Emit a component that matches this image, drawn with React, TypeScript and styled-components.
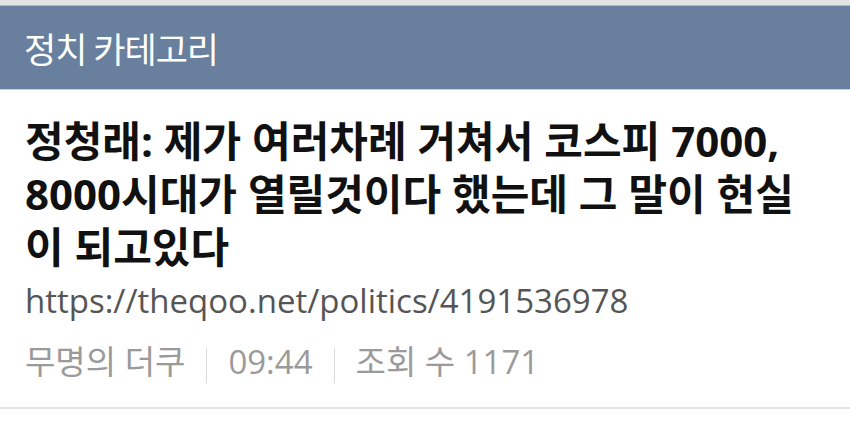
import React, {FC} from "react";
import styled, {createGlobalStyle} from "styled-components";

const GlobalStyle = createGlobalStyle`
  html, body {
    margin: 0;
    padding: 0;
    background: #ffffff;
  }
  body {
    font-family: "Open Sans", "Noto Sans CJK KR", sans-serif;
  }
`

const TopStrip = styled.div`
  height: 5px;
  background: #e4e4e4;
  border-bottom: 1px solid #b3b8be;
`

const Header = styled.header`
  height: 83px;
  background: #687f9e;
  border-bottom: 1px solid #c9d0d8;
  display: flex;
  align-items: center;
  padding-left: 24px;
  color: #ffffff;
  font-family: "Noto Sans CJK KR", sans-serif;
  font-size: 35px;
  font-weight: 400;
  letter-spacing: -1px;
`

const Article = styled.article`
  padding: 24px 40px 24px 25px;
  border-bottom: 2px solid #e2e2e2;
`

const Title = styled.h1`
  margin: 0;
  font-size: 42px;
  line-height: 53px;
  font-weight: 700;
  color: #111111;
`

const Link = styled.div`
  margin-top: 8px;
  font-size: 33px;
  line-height: 40px;
  color: #555555;
`

const Meta = styled.div`
  margin-top: 19px;
  display: flex;
  align-items: center;
  font-size: 33px;
  line-height: 40px;
  color: #9a9a9a;
`

const Divider = styled.span`
  width: 1px;
  height: 35px;
  margin: 8px 21px 0 21px;
  background: #dcdcdc;
`

const App: FC = () => {
    return (
        <React.Fragment>
            <GlobalStyle/>
            <TopStrip/>
            <Header>정치 카테고리</Header>
            <Article>
                <Title>정청래: 제가 여러차례 거쳐서 코스피 7000, 8000시대가 열릴것이다 했는데 그 말이 현실이 되고있다</Title>
                <Link>https://theqoo.net/politics/4191536978</Link>
                <Meta>
                    <span>무명의 더쿠</span>
                    <Divider/>
                    <span>09:44</span>
                    <Divider/>
                    <span>조회 수 1171</span>
                </Meta>
            </Article>
        </React.Fragment>
    )
}

export default App;
